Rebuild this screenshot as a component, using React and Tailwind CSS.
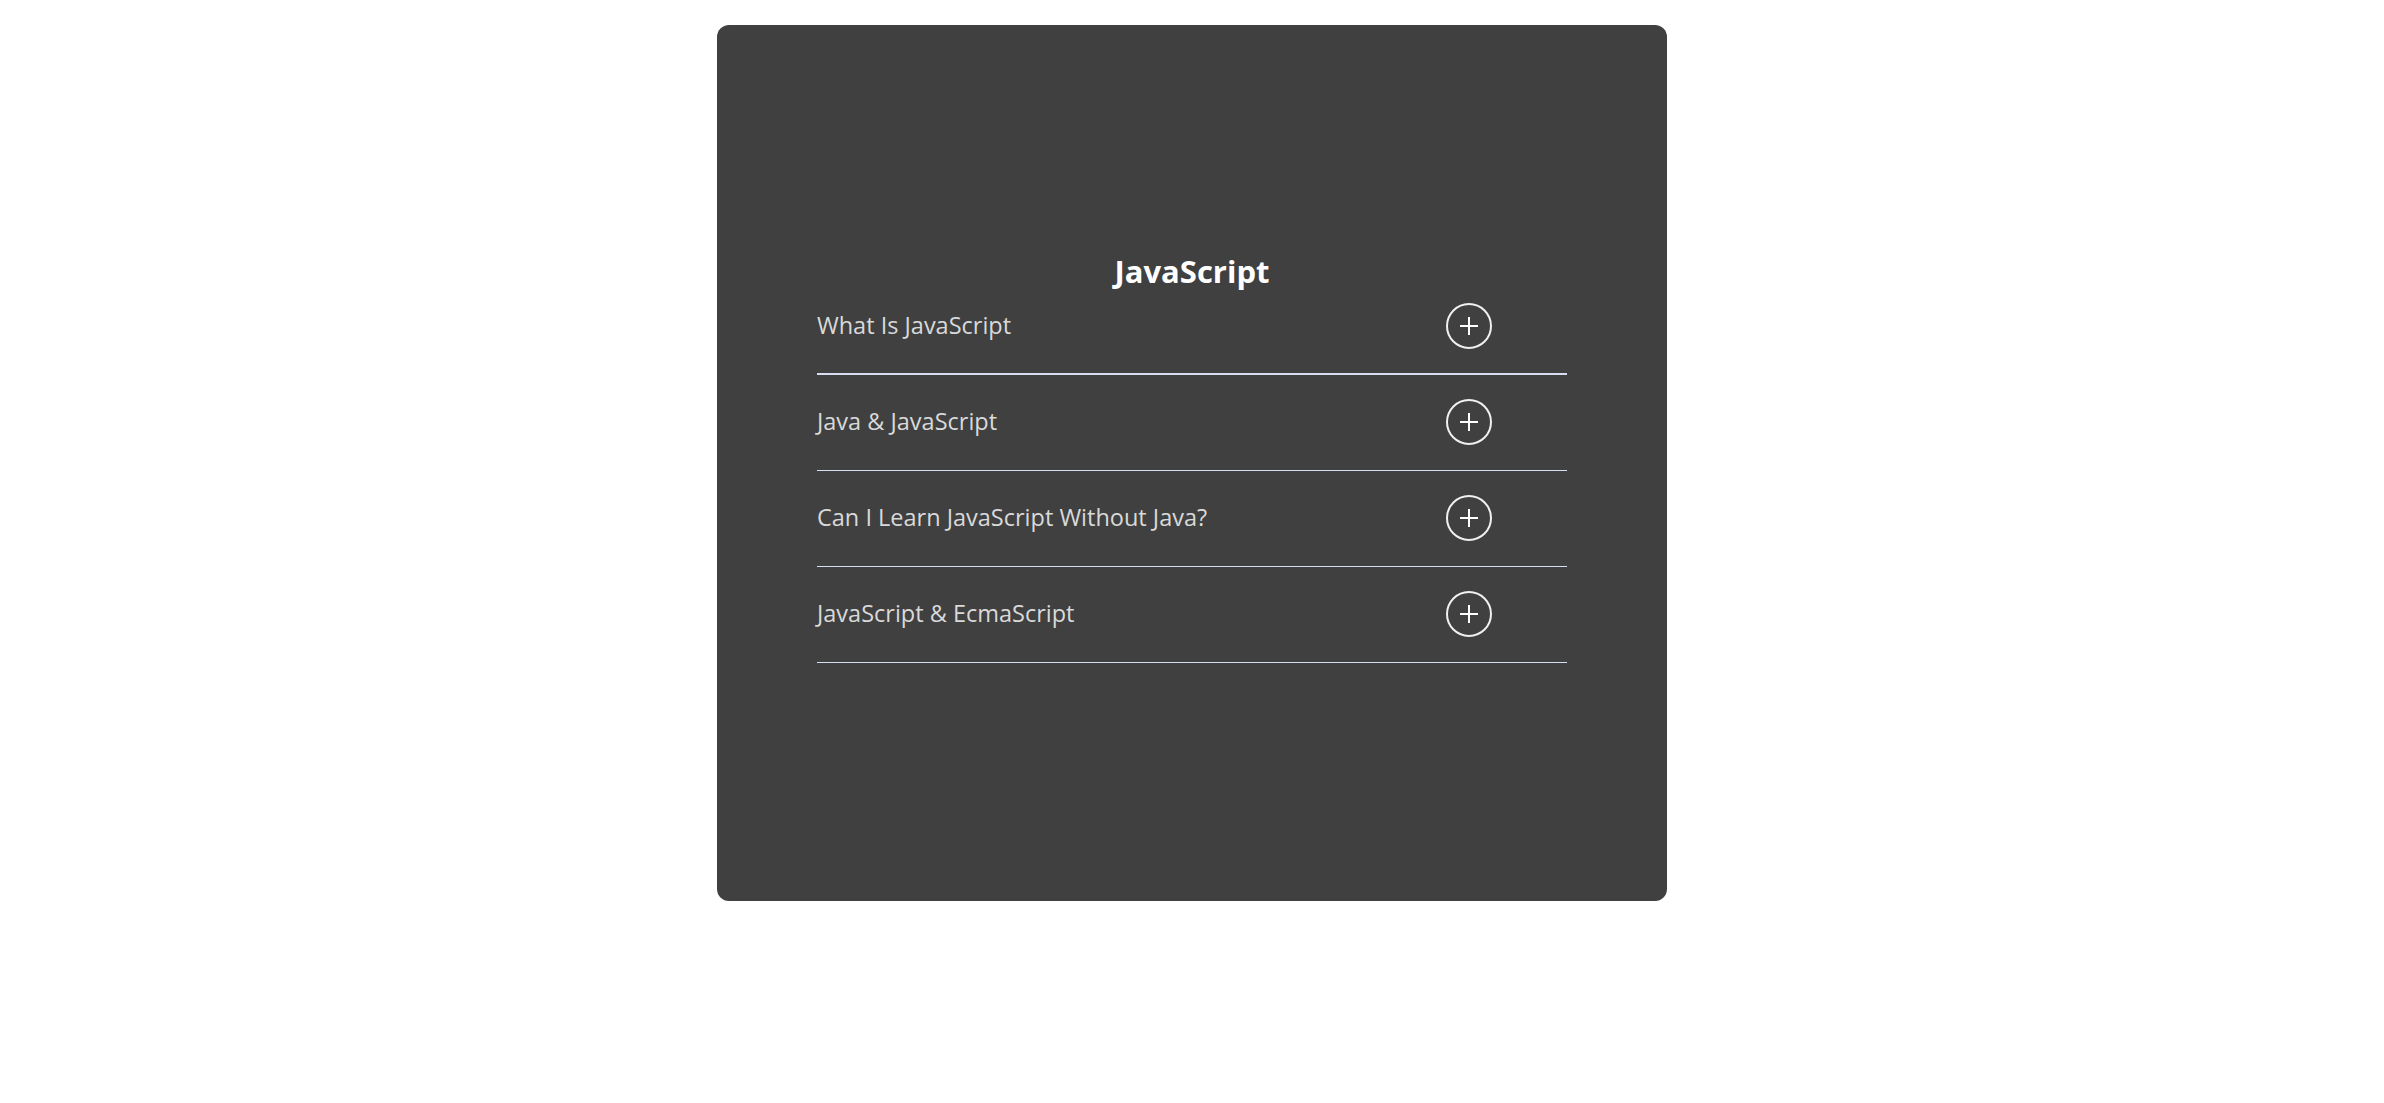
import React, { useState } from 'react';

const ITEMS = [
  'What Is JavaScript',
  'Java & JavaScript',
  'Can I Learn JavaScript Without Java?',
  'JavaScript & EcmaScript',
];

const PlusIcon = () => (
  <svg width="18" height="18" viewBox="0 0 18 18" aria-hidden>
    <path d="M9 0v18M0 9h18" stroke="currentColor" strokeWidth="2" fill="none" />
  </svg>
);

const Row = ({ label, first, open, onToggle }) => (
  <div
    className={`flex items-center border-[#d8def2] ${first ? 'border-b-2 pt-[13px] pb-6' : 'border-b pt-6 pb-[25px]'}`}
  >
    <span className="flex-1 text-[23.5px] leading-none text-[#d9d9d9]">{label}</span>
    <button
      type="button"
      onClick={onToggle}
      className="mr-[75px] flex h-[46px] w-[46px] items-center justify-center rounded-full border-2 border-[#f0f0f0] text-white"
      aria-expanded={open}
    >
      <PlusIcon />
    </button>
  </div>
);

export default function App() {
  const [open, setOpen] = useState(null);

  return (
    <div className="min-h-screen bg-white pt-[25px]" style={{ fontFamily: '"Segoe UI", "Open Sans", sans-serif' }}>
      <div className="mx-auto h-[876px] w-[950px] rounded-xl bg-[#404040] pt-[227px]">
        <div className="mx-auto w-[750px]">
          <h1 className="text-center text-[31px] font-bold leading-[38px] text-white">JavaScript</h1>
          {ITEMS.map((item, i) => (
            <Row
              key={item}
              label={item}
              first={i === 0}
              open={open === i}
              onToggle={() => setOpen(open === i ? null : i)}
            />
          ))}
        </div>
      </div>
    </div>
  );
}
